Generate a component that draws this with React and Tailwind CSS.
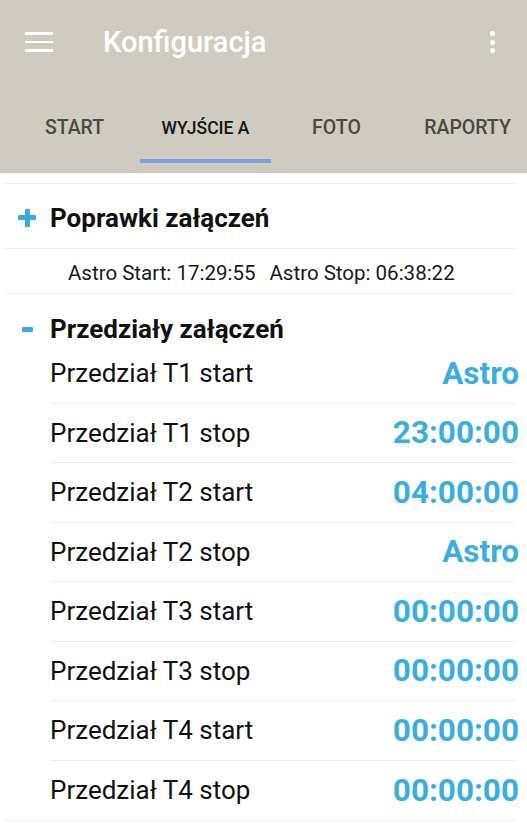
import React from 'react';

const tabs = ['START', 'WYJŚCIE A', 'FOTO', 'RAPORTY'];

const rows = [
  { label: 'Przedział T1 start', value: 'Astro' },
  { label: 'Przedział T1 stop', value: '23:00:00' },
  { label: 'Przedział T2 start', value: '04:00:00' },
  { label: 'Przedział T2 stop', value: 'Astro' },
  { label: 'Przedział T3 start', value: '00:00:00' },
  { label: 'Przedział T3 stop', value: '00:00:00' },
  { label: 'Przedział T4 start', value: '00:00:00' },
  { label: 'Przedział T4 stop', value: '00:00:00' },
];

const App = () => {
  return (
    <div className="w-[527px] min-h-[827px] bg-white overflow-hidden" style={{ fontFamily: 'Roboto, "Noto Sans", sans-serif' }}>
      {/* app bar */}
      <div className="bg-[#cfcbc0]">
        <div className="h-[84px] flex items-center">
          <div className="ml-[25px] w-[28px] flex flex-col gap-[6px]">
            <div className="h-[2.5px] bg-white"></div>
            <div className="h-[2.5px] bg-white"></div>
            <div className="h-[2.5px] bg-white"></div>
          </div>
          <div className="ml-[50px] text-[29px] font-medium text-white leading-none">Konfiguracja</div>
          <div className="ml-auto mr-[32px] flex flex-col gap-[3.5px]">
            <div className="w-[5px] h-[5px] rounded-full bg-white"></div>
            <div className="w-[5px] h-[5px] rounded-full bg-white"></div>
            <div className="w-[5px] h-[5px] rounded-full bg-white"></div>
          </div>
        </div>
        <div className="flex pl-[9px] pb-[10px]">
          {tabs.map((t, i) => (
            <div key={t} className="w-[131px] shrink-0 flex flex-col">
              <div
                className={`h-[75px] pt-[13px] flex items-center justify-center font-medium ${
                  i === 1 ? 'text-[17.5px] text-[#151515]' : 'text-[19.5px] text-[#4a4944]'
                }`}
              >
                {t}
              </div>
              <div className={`h-[4px] ${i === 1 ? 'bg-[#7f9fe3]' : ''}`}></div>
            </div>
          ))}
        </div>
      </div>

      {/* content */}
      <div className="ml-[5px] w-[510px] mt-[10px] border-t border-[#ececec]">
        <div className="h-[65px] flex items-center pt-[3px] border-b border-[#ececec]">
          <div className="ml-[13px] w-[18px] h-[18px] relative">
            <div className="absolute left-0 right-0 top-[6.5px] h-[5px] bg-[#39a9de] rounded-[1px]"></div>
            <div className="absolute top-0 bottom-0 left-[6.5px] w-[5px] bg-[#39a9de] rounded-[1px]"></div>
          </div>
          <div className="ml-[14px] text-[26px] font-bold text-[#111] leading-none">Poprawki załączeń</div>
        </div>

        <div className="h-[45px] flex items-center pt-[5px] pl-[63px] border-b border-[#ececec] text-[20.5px] text-[#1a1a1a] leading-none">
          <span>Astro Start: 17:29:55</span>
          <span className="ml-[14px]">Astro Stop: 06:38:22</span>
        </div>

        <div className="pt-[20px] h-[50px] flex items-start">
          <div className="h-[30px] flex items-center">
            <div className="ml-[17px] w-[11px] h-[5px] bg-[#39a9de] rounded-[1px]"></div>
            <div className="ml-[17px] text-[26px] font-bold text-[#111] leading-none">Przedziały załączeń</div>
          </div>
        </div>

        {rows.map((r, i) => (
          <div
            key={r.label}
            className={`h-[59.5px] flex items-center justify-between ml-[45px] ${
              i < rows.length - 1 ? 'border-b border-[#ececec]' : ''
            }`}
          >
            <span className="text-[26px] text-[#111] leading-none">{r.label}</span>
            <span className="-mr-[4px] text-[31.5px] font-bold text-[#3aaee0] leading-none">{r.value}</span>
          </div>
        ))}
        <div className="border-t border-[#ececec]"></div>
      </div>
    </div>
  );
};

export default App;
